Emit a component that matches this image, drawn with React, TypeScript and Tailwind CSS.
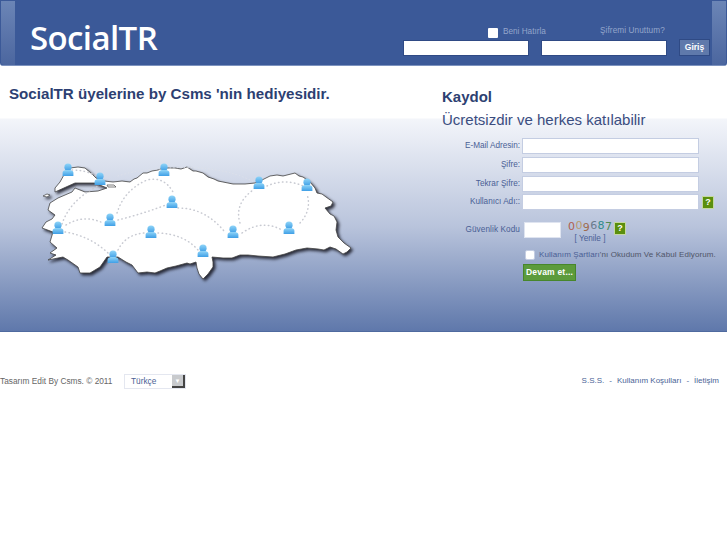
const pins = [
  [68, 170], [100, 179], [164, 170], [259, 183], [307, 185], [172, 202], [110, 220],
  [58, 228], [151, 232], [233, 232], [289, 228], [113, 257], [203, 251],
];

const trails = [
  'M72 170 Q86 170 96 176',
  'M62 224 Q70 200 98 186',
  'M66 225 Q84 214 103 223',
  'M65 232 Q90 236 108 253',
  'M117 213 Q124 190 147 180 Q164 176 173 192',
  'M118 220 Q142 214 166 205',
  'M178 208 Q205 208 224 231',
  'M118 250 Q126 234 145 233',
  'M158 233 Q184 234 198 250',
  'M240 223 Q234 204 253 190',
  'M267 186 Q285 178 303 186',
  'M242 233 Q262 219 282 230',
  'M300 223 Q312 210 307 194',
];

// lighter trail that runs past the coast
const faintTrails = ['M118 176 Q140 169 160 169', 'M170 168 Q222 165 254 182'];

const captcha = [
  ['0', 'text-[#b0604f]', 'mt-[1px]'], ['0', 'text-[#b99a6d]', 'mt-0'], ['9', 'text-[#a06a4c]', 'mt-[2px]'],
  ['6', 'text-[#6b7a8c]', 'mt-0'], ['8', 'text-[#2f8c8c]', 'mt-0'], ['7', 'text-[#4d8a55]', 'mt-[1px]'],
];

function TurkeyMap() {
  return (
    <svg width="330" height="135" viewBox="35 155 330 135" className="block">
      <defs>
        <linearGradient id="pin" x1="0" y1="0" x2="0" y2="1">
          <stop offset="0" stopColor="#8fd4f8" />
          <stop offset="1" stopColor="#3f9fe6" />
        </linearGradient>
      </defs>
      <g className="drop-shadow-[2px_2px_1.5px_rgba(20,20,30,0.85)]">
        <path
          fill="#fff"
          stroke="#444"
          strokeWidth="0.8"
          strokeLinejoin="round"
          d="M55 188 L60 182 L65 173 L70 168 L78 167 L85 168 L92 174 L96 178 L104 181 L113 182 L122 181 L130 182 L134 179 L137 178 L143 173 L147 173 L152 171 L158 170 L163 168 L175 168 L181 169 L187 167 L193 171 L196 171 L203 173 L208 177 L214 179 L218 181 L223 182 L228 183 L233 184 L245 184 L255 183 L262 180 L270 176 L277 175 L283 176 L287 175 L295 173 L299 176 L303 177 L310 182 L315 188 L317 193 L322 194 L326 197 L333 202 L331 206 L325 208 L330 214 L334 216 L337 222 L336 230 L338 237 L344 243 L351 248 L347 252 L343 254 L336 249 L330 247 L324 250 L318 249 L307 248 L296 250 L285 254 L273 257 L258 256 L248 255 L240 255 L232 258 L223 258 L212 257 L213 262 L213 267 L208 274 L203 279 L199 274 L197 268 L196 262 L190 264 L187 263 L176 266 L167 268 L160 271 L155 273 L147 272 L138 273 L132 265 L126 262 L118 257 L107 257 L100 267 L90 273 L80 273 L78 267 L68 260 L63 257 L48 260 L56 255 L50 253 L57 248 L50 242 L53 232 L42 228 L46 222 L52 219 L55 215 L48 210 L50 203 L58 198 L72 192 L75 188 L85 192 L98 191 L107 188 L95 183 L75 183 L55 192 L55 188 Z"
        />
        <path fill="#fff" stroke="#444" strokeWidth="0.7" d="M43 196 L47 194 L50 195 L47 197 Z" />
        <path fill="#fff" stroke="#444" strokeWidth="0.7" d="M107 185 L114 185 L116 187 L108 187 Z" />
      </g>
      <g fill="none" stroke="#c8cad2" strokeWidth="1.5" strokeLinecap="round" strokeDasharray="0.5 3.5">
        {trails.map((d) => (
          <path key={d} d={d} />
        ))}
      </g>
      <g fill="none" stroke="#dfe2ea" strokeWidth="1" strokeLinecap="round" strokeDasharray="0.5 3">
        {faintTrails.map((d) => (
          <path key={d} d={d} />
        ))}
      </g>
      {pins.map(([x, y]) => (
        <g key={`${x}-${y}`} transform={`translate(${x} ${y})`} fill="url(#pin)">
          <circle cx="0" cy="-2.8" r="3.6" />
          <path d="M-5.4 6 L-5.4 2.8 Q-5.4 0.6 -2.4 0 L2.4 0 Q5.4 0.6 5.4 2.8 L5.4 6 Z" />
        </g>
      ))}
    </svg>
  );
}

function Strip({ side }: { side: 'left' | 'right' }) {
  return (
    <div
      className={`w-[14px] shrink-0 mt-px bg-[linear-gradient(to_bottom,#6b85b6,#4b669f)] ${
        side === 'left' ? 'ml-px rounded-bl-[3px]' : 'mr-px rounded-br-[3px]'
      }`}
    />
  );
}

function Help() {
  return (
    <span className="w-[12px] h-[13px] bg-[#5b8f0e] border border-[#c4d8a0] text-white text-[9px] font-bold leading-[11px] text-center">
      ?
    </span>
  );
}

function Field({ label, help }: { label: string; help?: boolean }) {
  return (
    <div className="flex items-center h-[18.7px]">
      <label className="w-[78px] mr-[2px] text-right text-[8.2px] text-[#4a5f95] whitespace-nowrap">{label}</label>
      <input className="w-[177px] h-[16px] bg-white border border-[#c4cde2] outline-none" />
      {help && <span className="ml-[3px] flex"><Help /></span>}
    </div>
  );
}

export default function App() {
  return (
    <div className="w-[727px] h-[545px] bg-white overflow-hidden font-['Liberation_Sans',Arial,sans-serif]">
      {/* Header */}
      <header className="flex h-[66px] bg-[#3b5998] border-b border-[#7d93bf] rounded-b-[3px]">
        <Strip side="left" />
        <div className="flex-1 flex justify-between">
          <div className="pl-[15px] pt-[16px] font-['Open_Sans',sans-serif] font-semibold text-[33px] leading-[44px] text-white tracking-[-0.6px]">
            SocialTR
          </div>
          <div className="pr-[2px] pt-[26px]">
            <div className="flex items-center h-[13px] text-[8.2px] text-[#94a6cb]">
              <input type="checkbox" className="ml-[85px] w-[10px] h-[10px] appearance-none bg-white rounded-[1px]" />
              <span className="ml-[5px] w-[97px]">Beni Hatırla</span>
              <span className="tracking-[0.1px] -mt-[2px]">Şifremi Unuttum?</span>
            </div>
            <div className="flex items-center gap-[12px] mt-[0px]">
              <input className="w-[126px] h-[16px] bg-white border border-[#2f4a85] outline-none" />
              <input className="w-[126px] h-[16px] bg-white border border-[#2f4a85] outline-none" />
              <button className="w-[31px] h-[17px] bg-[#5f79ab] border border-[#2f4a85] text-white text-[8.5px] font-bold">
                Giriş
              </button>
            </div>
          </div>
        </div>
        <Strip side="right" />
      </header>

      {/* Hero */}
      <main className="flex h-[266px] border-b border-[#4f6a9f] bg-[linear-gradient(to_bottom,#fff_0,#fff_52px,#f3f5fa_53px,#b9c4dc_160px,#5f78ab_100%)]">
        <section className="w-[442px] shrink-0">
          <h1 className="ml-[9px] mt-[18px] text-[15.15px] leading-[20px] font-bold text-[#2d3f72] whitespace-nowrap">
            SocialTR üyelerine by Csms 'nin hediyesidir.
          </h1>
          <div className="ml-[35px] mt-[51px]">
            <TurkeyMap />
          </div>
        </section>
        <section className="flex-1">
          <h2 className="mt-[22px] text-[15px] leading-[18px] font-bold text-[#2d3f72]">Kaydol</h2>
          <p className="mt-[5px] text-[15px] leading-[18px] text-[#3b4d80]">Ücretsizdir ve herkes katılabilir</p>
          <div className="mt-[8px]">
            <Field label="E-Mail Adresin:" />
            <Field label="Şifre:" />
            <Field label="Tekrar Şifre:" />
            <Field label="Kullanıcı Adı::" help />
            <div className="flex items-start mt-[9px]">
              <label className="w-[78px] mt-[3px] text-right text-[8.2px] text-[#4a5f95] tracking-[0.1px] whitespace-nowrap">Güvenlik Kodu</label>
              <input className="ml-[4px] mt-px w-[37px] h-[16px] bg-white border border-[#dfe4f0] outline-none" />
              <div className="ml-[7px] -mt-[2px] w-[44px] text-center">
                <div className="flex justify-between text-[11px] leading-[13px] font-['DejaVu_Sans',sans-serif]">
                  {captcha.map(([c, color, offset], i) => (
                    <span key={i} className={`${color} ${offset}`}>{c}</span>
                  ))}
                </div>
                <div className="mt-0 text-[8.2px] leading-[10px] text-[#4a5f95]">[ Yenile ]</div>
              </div>
              <span className="ml-[2px] mt-[1px] flex"><Help /></span>
            </div>
            <div className="flex items-center mt-[5px] ml-[83px] h-[12px]">
              <input type="checkbox" className="w-[10px] h-[10px] appearance-none bg-white border border-[#c4cde2] rounded-[2px]" />
              <span className="ml-[4px] text-[8px] tracking-[0.1px] text-[#4a5f95] whitespace-nowrap">
                Kullanım Şartları<span className="text-[#4f5568]">'nı Okudum Ve Kabul Ediyorum.</span>
              </span>
            </div>
            <button className="block ml-[81px] mt-[3px] w-[53px] h-[17px] bg-[#5c9b3c] border border-[#47862b] text-white text-[8.5px] font-bold tracking-[0.2px] text-left pl-[2px] whitespace-nowrap">
              Devam et...
            </button>
          </div>
        </section>
      </main>

      {/* Footer */}
      <footer className="flex justify-between items-center mt-[41px] h-[16px] pr-[8px]">
        <div className="flex items-center text-[8.3px] text-[#666]">
          <span className="w-[124px]">Tasarım Edit By Csms. © 2011</span>
          <div className="flex justify-between items-center w-[62px] h-[15px] border border-[#e4e7f0] pl-[6px] text-[#4a5f95]">
            Türkçe
            <span className="w-[13px] h-[13px] bg-[#c8cacd] border-r-2 border-b-2 border-[#444] text-center text-[6px] leading-[12px] text-white">▼</span>
          </div>
        </div>
        <nav className="flex gap-[5px] text-[8px] text-[#4a6496]">
          <a>S.S.S.</a><span>-</span><a>Kullanım Koşulları</a><span>-</span><a>İletişim</a>
        </nav>
      </footer>
    </div>
  );
}
